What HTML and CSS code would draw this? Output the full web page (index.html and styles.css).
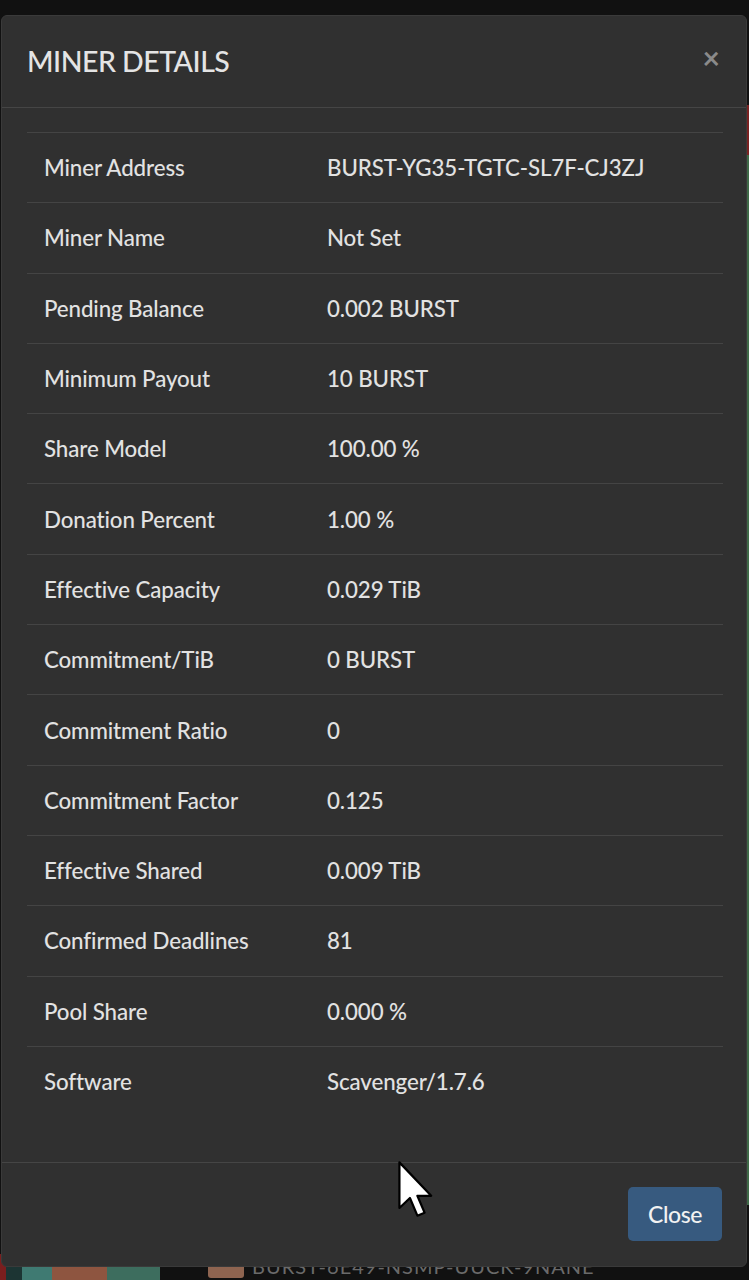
FILE: index.html
```html
<!DOCTYPE html>
<html>
<head>
<meta charset="utf-8">
<link rel="stylesheet" href="styles.css">
</head>
<body>
<div class="page">
  <div class="page-side"><span class="side-red"></span><span class="side-green"></span></div>
  <div class="page-bottom">
    <div class="art">
      <span class="art-red"></span><span class="art-dark"></span><span class="art-teal"></span><span class="art-orange"></span><span class="art-green"></span>
    </div>
    <span class="badge"></span>
    <span class="addr">BURST-6E49-NSMP-UUCK-9NANE</span>
  </div>
</div>

<div class="modal">
  <div class="modal-header">
    <h4 class="modal-title">MINER DETAILS</h4>
    <span class="close-x">×</span>
  </div>
  <div class="modal-body">
    <table class="details">
      <tr><td>Miner Address</td><td>BURST-YG35-TGTC-SL7F-CJ3ZJ</td></tr>
      <tr><td>Miner Name</td><td>Not Set</td></tr>
      <tr><td>Pending Balance</td><td>0.002 BURST</td></tr>
      <tr><td>Minimum Payout</td><td>10 BURST</td></tr>
      <tr><td>Share Model</td><td>100.00 %</td></tr>
      <tr><td>Donation Percent</td><td>1.00 %</td></tr>
      <tr><td>Effective Capacity</td><td>0.029 TiB</td></tr>
      <tr><td>Commitment/TiB</td><td>0 BURST</td></tr>
      <tr><td>Commitment Ratio</td><td>0</td></tr>
      <tr><td>Commitment Factor</td><td>0.125</td></tr>
      <tr><td>Effective Shared</td><td>0.009 TiB</td></tr>
      <tr><td>Confirmed Deadlines</td><td>81</td></tr>
      <tr><td>Pool Share</td><td>0.000 %</td></tr>
      <tr><td>Software</td><td>Scavenger/1.7.6</td></tr>
    </table>
  </div>
  <div class="modal-footer">
    <button class="btn">Close</button>
  </div>
</div>

<svg class="cursor" width="36" height="58" viewBox="0 0 13 21">
  <path d="M0.5 0.5 L0.5 17 L4.3 13.4 L7 19.8 L9.6 18.7 L7 12.6 L12 12.6 Z" fill="#fff" stroke="#000" stroke-width="0.8" stroke-linejoin="round"/>
</svg>
</body>
</html>
```

FILE: styles.css
```css
* { box-sizing: border-box; }
html, body { margin: 0; padding: 0; }
body {
  background: #111;
  font-family: Lato, "Open Sans", "Liberation Sans", sans-serif;
  color: #e2e2e2;
  width: 749px;
  height: 1280px;
  overflow: hidden;
  position: relative;
}
.page {
  height: 1280px;
  display: flex;
  flex-direction: column;
  justify-content: flex-end;
  position: relative;
}
.page-side {
  position: absolute;
  right: 0;
  top: 105px;
  width: 3px;
  display: flex;
  flex-direction: column;
}
.side-red { height: 50px; background: #7a2222; }
.side-green { height: 1050px; background: #3f6a48; }
.page-bottom {
  height: 26px;
  display: flex;
  align-items: flex-end;
  gap: 8px;
}
.art {
  width: 160px;
  height: 26px;
  display: flex;
  margin-right: 40px;
}
.art span { display: block; height: 100%; }
.art-red { width: 6px; background: #7a1e1e; }
.art-dark { width: 16px; background: #1c3433; }
.art-teal { width: 30px; background: #3f7a72; }
.art-orange { width: 55px; background: #8e5540; }
.art-green { width: 53px; background: #3d6d5e; }
.badge {
  width: 36px;
  height: 22px;
  margin-bottom: 2px;
  background: #8e6450;
  border-radius: 3px;
}
.addr {
  font-size: 20px;
  color: #6a6a6a;
  line-height: 22px;
  margin-bottom: 3px;
  letter-spacing: 1px;
}

.modal {
  position: absolute;
  left: 1px;
  top: 15px;
  width: 746px;
  height: 1252px;
  background: #303030;
  border: 1px solid #3a3a3a;
  border-radius: 6px;
  display: flex;
  flex-direction: column;
}
.modal-header {
  height: 92px;
  display: flex;
  align-items: center;
  justify-content: space-between;
  padding: 0 24px 2px 25px;
  border-bottom: 1px solid #454545;
}
.modal-title {
  margin: 0;
  font-size: 28.5px;
  font-weight: 500;
  letter-spacing: -0.5px;
  color: #e4e4e4;
}
.close-x {
  font-size: 30px;
  font-weight: 700;
  color: #8a8a8a;
  line-height: 1;
  margin-top: -8px;
  margin-right: 2px;
}
.modal-body {
  flex: 1;
  padding: 24px 24px 0 25px;
}
.details {
  width: 696px;
  border-collapse: collapse;
}
.details td {
  height: 70.3px;
  border-top: 1px solid #444;
  padding: 0 17px;
  font-size: 22.3px;
  font-weight: 500;
  vertical-align: middle;
  color: #e2e2e2;
  letter-spacing: -0.1px;
}
.details td:first-child { width: 283px; }
.modal-footer {
  height: 104px;
  border-top: 1px solid #454545;
  display: flex;
  justify-content: flex-end;
  align-items: flex-start;
  padding: 24px 24px 0 0;
}
.btn {
  width: 94px;
  height: 54px;
  background: #375a7f;
  border: none;
  border-radius: 5px;
  color: #f2f2f2;
  font-family: Lato, "Open Sans", sans-serif;
  font-size: 23px;
  font-weight: 500;
  letter-spacing: -0.4px;
  padding: 0;
}
.cursor {
  position: absolute;
  left: 398px;
  top: 1161px;
}
```
